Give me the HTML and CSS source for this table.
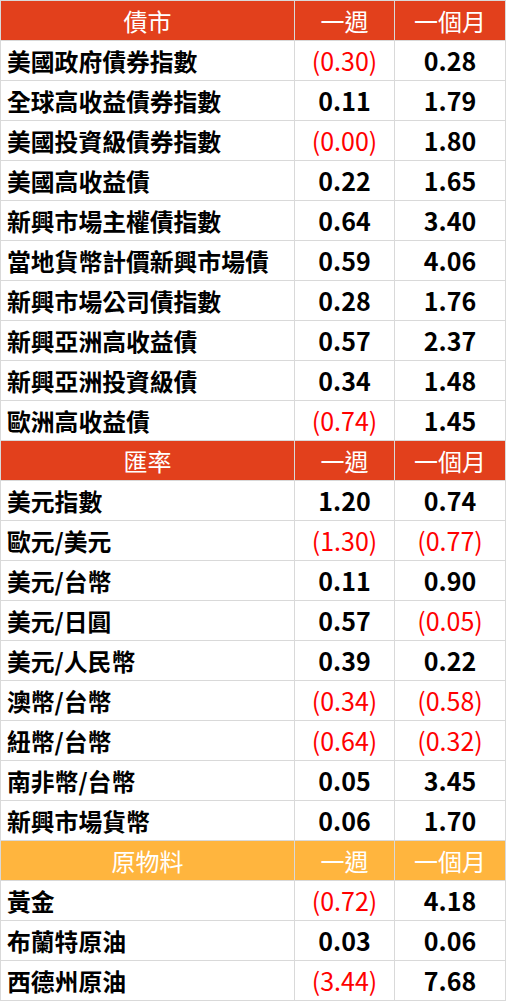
FILE: index.html
```html
<!DOCTYPE html>
<html lang="zh-Hant">
<head>
<meta charset="utf-8">
<link rel="stylesheet" href="styles.css">
</head>
<body>
<table class="mkt">
<colgroup><col class="c1"><col class="c2"><col class="c3"></colgroup>
<tbody>
<tr class="hd red"><th>債市</th><th>一週</th><th>一個月</th></tr>
<tr><td>美國政府債券指數</td><td class="neg">(0.30)</td><td>0.28</td></tr>
<tr><td>全球高收益債券指數</td><td>0.11</td><td>1.79</td></tr>
<tr><td>美國投資級債券指數</td><td class="neg">(0.00)</td><td>1.80</td></tr>
<tr><td>美國高收益債</td><td>0.22</td><td>1.65</td></tr>
<tr><td>新興市場主權債指數</td><td>0.64</td><td>3.40</td></tr>
<tr><td>當地貨幣計價新興市場債</td><td>0.59</td><td>4.06</td></tr>
<tr><td>新興市場公司債指數</td><td>0.28</td><td>1.76</td></tr>
<tr><td>新興亞洲高收益債</td><td>0.57</td><td>2.37</td></tr>
<tr><td>新興亞洲投資級債</td><td>0.34</td><td>1.48</td></tr>
<tr><td>歐洲高收益債</td><td class="neg">(0.74)</td><td>1.45</td></tr>
<tr class="hd red"><th>匯率</th><th>一週</th><th>一個月</th></tr>
<tr><td>美元指數</td><td>1.20</td><td>0.74</td></tr>
<tr><td>歐元/美元</td><td class="neg">(1.30)</td><td class="neg">(0.77)</td></tr>
<tr><td>美元/台幣</td><td>0.11</td><td>0.90</td></tr>
<tr><td>美元/日圓</td><td>0.57</td><td class="neg">(0.05)</td></tr>
<tr><td>美元/人民幣</td><td>0.39</td><td>0.22</td></tr>
<tr><td>澳幣/台幣</td><td class="neg">(0.34)</td><td class="neg">(0.58)</td></tr>
<tr><td>紐幣/台幣</td><td class="neg">(0.64)</td><td class="neg">(0.32)</td></tr>
<tr><td>南非幣/台幣</td><td>0.05</td><td>3.45</td></tr>
<tr><td>新興市場貨幣</td><td>0.06</td><td>1.70</td></tr>
<tr class="hd orange"><th>原物料</th><th>一週</th><th>一個月</th></tr>
<tr><td>黃金</td><td class="neg">(0.72)</td><td>4.18</td></tr>
<tr><td>布蘭特原油</td><td>0.03</td><td>0.06</td></tr>
<tr><td>西德州原油</td><td class="neg">(3.44)</td><td>7.68</td></tr>
</tbody>
</table>
</body>
</html>
```
FILE: styles.css
```css
html, body {
  margin: 0;
  padding: 0;
  background: #ffffff;
}
body {
  font-family: "Noto Sans CJK TC", "Noto Sans", sans-serif;
}
.mkt {
  border-collapse: collapse;
  table-layout: fixed;
  width: 505px;
}
.c1 { width: 294px; }
.c2 { width: 100px; }
.c3 { width: 111px; }
.mkt th,
.mkt td {
  border: 1px solid #d9d9d9;
  height: 39px;
  padding: 0;
  font-size: 25px;
  line-height: 1;
  color: #000;
  text-align: center;
  font-weight: 700;
  vertical-align: middle;
}
.mkt td:first-child {
  text-align: left;
  padding-left: 6px;
  font-size: 23.8px;
}
.mkt th {
  color: #fff;
  font-weight: 400;
  font-size: 24px;
}
.hd.red th {
  background: #e2401c;
}
.hd.orange th {
  background: #ffb53e;
}
.mkt td.neg {
  color: #ff0000;
  font-weight: 400;
}
```
